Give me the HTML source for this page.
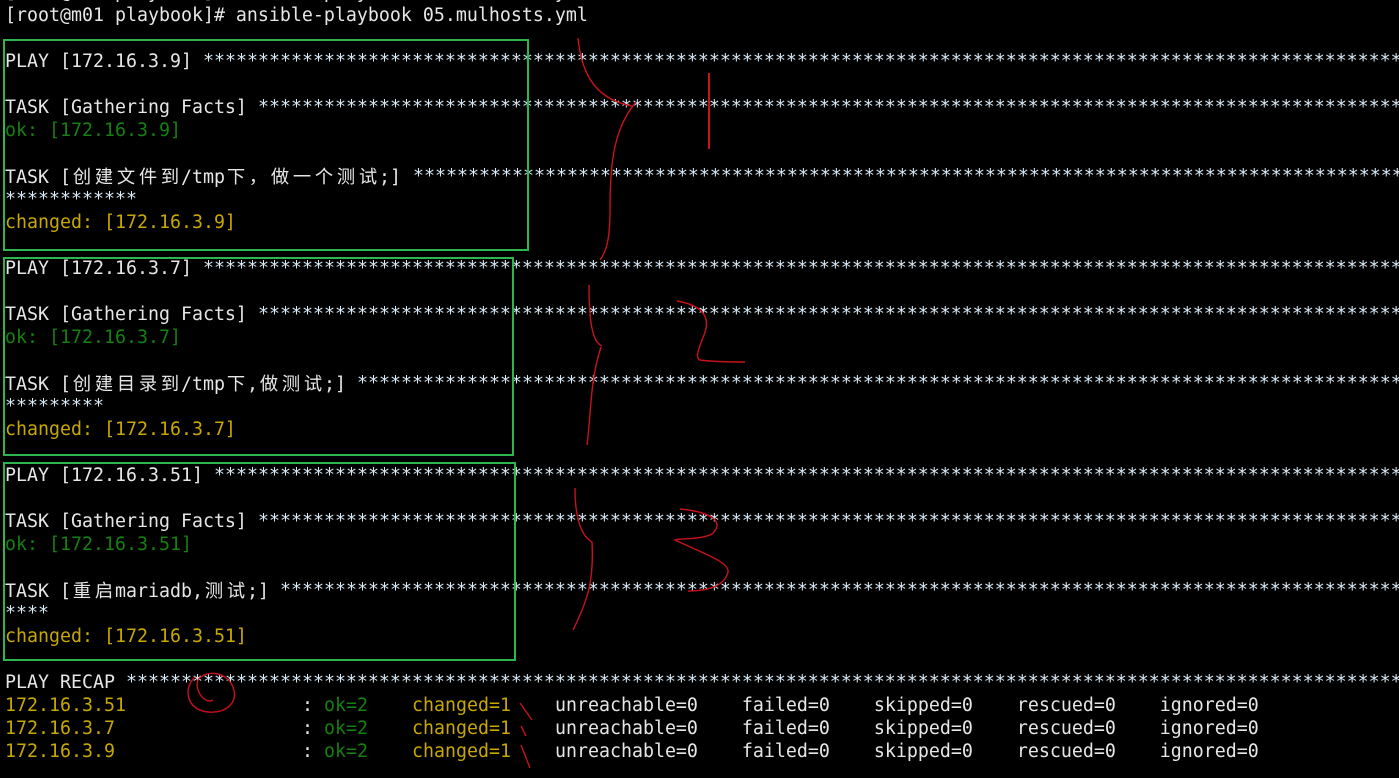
<!DOCTYPE html>
<html><head><meta charset="utf-8"><style>
body{margin:0;background:#000;width:1399px;height:778px;overflow:hidden;position:relative;font-family:"DejaVu Sans Mono","Liberation Mono","Noto Sans CJK SC",monospace;font-size:18.27px;color:#e6e6e6}
.l{position:absolute;left:5px;white-space:pre;line-height:23px;height:23px}
.s{position:absolute;white-space:pre;line-height:23px;color:#d8e8f4;overflow:hidden;right:0}
.g{color:#14800f}.y{color:#c8a800}
.box{position:absolute;border:2px solid #2fb54e;box-sizing:border-box}
.c{font-family:"Noto Sans CJK SC",sans-serif;display:inline-block;width:22px;text-align:center}
</style></head><body>
<div class="l" style="top:-19px">[root@m01 playbook]# ansible-playbook 05.mulhosts.yml</div>
<div class="l" style="top:4px">[root@m01 playbook]# ansible-playbook 05.mulhosts.yml</div>

<div class="l" style="top:50px">PLAY [172.16.3.9]</div><div class="s" style="top:50px;left:203px"></div>
<div class="l" style="top:96px">TASK [Gathering Facts]</div><div class="s" style="top:96px;left:258px"></div>
<div class="l g" style="top:119px">ok: [172.16.3.9]</div>
<div class="l" style="top:165px">TASK [<span class="c">创</span><span class="c">建</span><span class="c">文</span><span class="c">件</span><span class="c">到</span>/tmp<span class="c">下</span><span class="c">，</span><span class="c">做</span><span class="c">一</span><span class="c">个</span><span class="c">测</span><span class="c">试</span>;]</div><div class="s" style="top:165px;left:413px"></div>
<div class="l" style="top:188px;color:#d8e8f4">************</div>
<div class="l y" style="top:211px">changed: [172.16.3.9]</div>

<div class="l" style="top:257px">PLAY [172.16.3.7]</div><div class="s" style="top:257px;left:203px"></div>
<div class="l" style="top:303px">TASK [Gathering Facts]</div><div class="s" style="top:303px;left:258px"></div>
<div class="l g" style="top:326px">ok: [172.16.3.7]</div>
<div class="l" style="top:372px">TASK [<span class="c">创</span><span class="c">建</span><span class="c">目</span><span class="c">录</span><span class="c">到</span>/tmp<span class="c">下</span>,<span class="c">做</span><span class="c">测</span><span class="c">试</span>;]</div><div class="s" style="top:372px;left:357px"></div>
<div class="l" style="top:395px;color:#d8e8f4">*********</div>
<div class="l y" style="top:418px">changed: [172.16.3.7]</div>

<div class="l" style="top:464px">PLAY [172.16.3.51]</div><div class="s" style="top:464px;left:214px"></div>
<div class="l" style="top:510px">TASK [Gathering Facts]</div><div class="s" style="top:510px;left:258px"></div>
<div class="l g" style="top:533px">ok: [172.16.3.51]</div>
<div class="l" style="top:579px">TASK [<span class="c">重</span><span class="c">启</span>mariadb,<span class="c">测</span><span class="c">试</span>;]</div><div class="s" style="top:579px;left:280px"></div>
<div class="l" style="top:602px;color:#d8e8f4">****</div>
<div class="l y" style="top:625px">changed: [172.16.3.51]</div>

<div class="l" style="top:671px">PLAY RECAP</div><div class="s" style="top:671px;left:126px"></div>
<div class="l y" style="top:694px">172.16.3.51</div>
<div class="l y" style="top:717px">172.16.3.7</div>
<div class="l y" style="top:740px">172.16.3.9</div>
<div class="l" style="top:694px;left:302px">: <span class="g">ok=2</span>    <span class="y">changed=1</span>    unreachable=0    failed=0    skipped=0    rescued=0    ignored=0</div>
<div class="l" style="top:717px;left:302px">: <span class="g">ok=2</span>    <span class="y">changed=1</span>    unreachable=0    failed=0    skipped=0    rescued=0    ignored=0</div>
<div class="l" style="top:740px;left:302px">: <span class="g">ok=2</span>    <span class="y">changed=1</span>    unreachable=0    failed=0    skipped=0    rescued=0    ignored=0</div>

<div class="box" style="left:3px;top:39px;width:526px;height:212px"></div>
<div class="box" style="left:3px;top:257px;width:511px;height:199px"></div>
<div class="box" style="left:3px;top:462px;width:513px;height:199px"></div>

<svg width="1399" height="778" style="position:absolute;left:0;top:0" fill="none" stroke="#c8121a" stroke-width="1.4">
<path d="M578,38 C582,80 600,100 632,106"/>
<path d="M636,102 C612,130 610,170 610,210 C610,240 606,252 600,260"/>
<path d="M709,73 L709,149" stroke-width="2"/>
<path d="M589,285 C589,320 592,342 602,346"/>
<path d="M601,347 C590,380 591,415 587,445"/>
<path d="M677,301 C700,305 712,315 704,335 C698,350 695,358 700,360 C715,362 735,362 745,362"/>
<path d="M575,488 C575,515 580,535 592,542 C594,580 588,600 573,630"/>
<path d="M680,509 C712,512 725,522 712,534 C700,540 680,538 675,540 C700,552 730,562 728,572 C725,585 710,591 688,591"/>
<path d="M195,677 C183,688 186,710 208,712 C228,714 240,700 232,685 C225,671 205,670 198,680 C194,690 205,705 213,700"/>
<path d="M520,703 L532,720"/>
<path d="M521,726 L526,736"/>
<path d="M521,745 L530,768"/>
</svg>
<script>
var st="*".repeat(150);document.querySelectorAll('.s').forEach(function(e){e.textContent=st});
</script>
</body></html>
